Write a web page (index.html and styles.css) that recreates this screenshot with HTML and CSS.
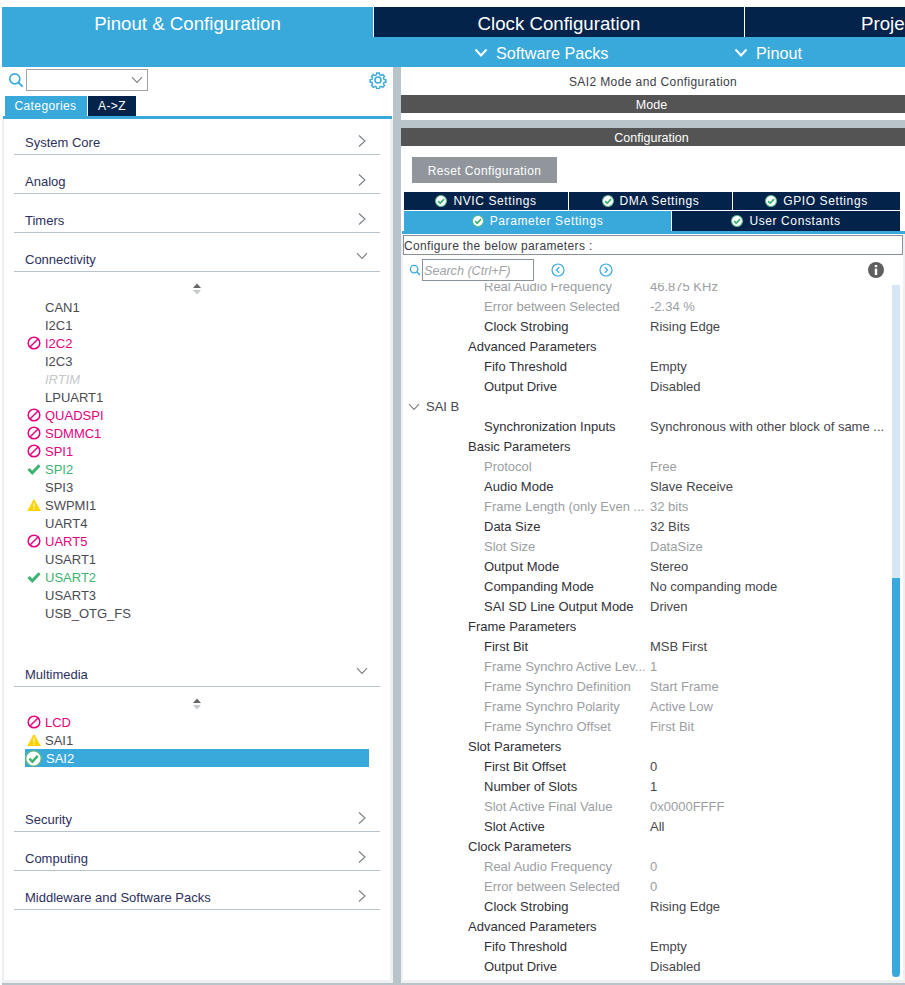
FILE: index.html
```html
<!DOCTYPE html>
<html>
<head>
    <title>SAI2 Mode and Configuration</title>
    <link rel="stylesheet" href="styles.css">
</head>
<body>
    <svg class="defs" width="0" height="0">
        <symbol id="ban" viewBox="0 0 14 14"><circle cx="7" cy="7" r="5.8" fill="none" stroke="#e6007e" stroke-width="1.5"/><path d="M3 11 11 3" stroke="#e6007e" stroke-width="1.5"/></symbol>
        <symbol id="tick" viewBox="0 0 14 14"><path d="M1.5 7 5.3 10.8 12.5 3.2" fill="none" stroke="#3cb371" stroke-width="3"/></symbol>
        <symbol id="warn" viewBox="0 0 14 14"><path d="M7 .8 13.8 13H.2Z" fill="#ffd200"/><path d="M7 5v4.4M7 10.4v1.3" stroke="#fff" stroke-width="1.1"/></symbol>
        <symbol id="okdot" viewBox="0 0 14 14"><circle cx="7" cy="7" r="6.4" fill="#fff" stroke="#5cb88a" stroke-width="1.2"/><path d="M3.6 7.2 6.1 9.6 10.5 4.8" fill="none" stroke="#3cb371" stroke-width="2"/></symbol>
        <symbol id="right" viewBox="0 0 12 14"><path d="M3 1.5 9 7 3 12.5" fill="none" stroke="#7b8086" stroke-width="1.1"/></symbol>
        <symbol id="down" viewBox="0 0 14 12"><path d="M2 3.2 7 8.4 12 3.2" fill="none" stroke="#7b8086" stroke-width="1.1"/></symbol>
        <symbol id="white-down" viewBox="0 0 14 12"><path d="M1.5 2.5 7 8.5 12.5 2.5" fill="none" stroke="#fff" stroke-width="2"/></symbol>
        <symbol id="lens" viewBox="0 0 16 16"><circle cx="6.8" cy="6.8" r="5" fill="none" stroke="#39a9dc" stroke-width="1.7"/><path d="M10.4 10.4 14.6 14.6" stroke="#39a9dc" stroke-width="2"/></symbol>
        <symbol id="sort" viewBox="0 0 10 12"><path d="M5 .5 9 5H1Z" fill="#666"/><path d="M5 11.5 9 7H1Z" fill="#c4c8cc"/></symbol>
    </svg>

    <div class="app">
        <div class="main-tabs">
            <div class="main-tab active">Pinout &amp; Configuration</div>
            <div class="main-tab clock">Clock Configuration</div>
            <div class="main-tab project">Project Manager</div>
        </div>
        <div class="sub-bar">
            <div class="sub-item packs"><svg class="sub-icon"><use href="#white-down"/></svg>Software Packs</div>
            <div class="sub-item pinout"><svg class="sub-icon"><use href="#white-down"/></svg>Pinout</div>
        </div>

        <div class="columns">
            <div class="left">
                <div class="search-row">
                    <svg class="lens"><use href="#lens"/></svg>
                    <div class="select"><svg class="select-arrow"><use href="#down"/></svg></div>
                    <svg class="gear" viewBox="0 0 18 18">
                        <path d="M7.6 1.2h2.8l.4 2.1 1.5.7 1.9-1.1 2 2-1.1 1.8.6 1.6 2.1.4v2.6l-2.1.4-.6 1.6 1.1 1.8-2 2-1.9-1.1-1.5.7-.4 2.1H7.6l-.4-2.1-1.5-.7-1.9 1.1-2-2 1.1-1.8-.6-1.6-2.1-.4V8.7l2.1-.4.6-1.6-1.1-1.8 2-2 1.9 1.1 1.5-.7z" transform="translate(.9 .9) scale(.9)" fill="none" stroke="#39a9dc" stroke-width="1.6"/>
                        <circle cx="9" cy="9" r="3" fill="none" stroke="#39a9dc" stroke-width="1.6"/>
                    </svg>
                </div>
                <div class="cat-tabs">
                    <div class="cat-tab active">Categories</div>
                    <div class="cat-tab az">A-&gt;Z</div>
                </div>
                <div class="cat-line"></div>
                <div class="tree">
                    <div class="cat first">System Core<svg class="cat-right"><use href="#right"/></svg></div>
                    <div class="cat">Analog<svg class="cat-right"><use href="#right"/></svg></div>
                    <div class="cat">Timers<svg class="cat-right"><use href="#right"/></svg></div>
                    <div class="cat">Connectivity<svg class="cat-down"><use href="#down"/></svg></div>
                    <div class="sort"><svg class="sort-icon"><use href="#sort"/></svg></div>
                    <div class="items connectivity">
                        <div class="item"><span class="slot"></span>CAN1</div>
                        <div class="item"><span class="slot"></span>I2C1</div>
                        <div class="item pink"><svg class="slot"><use href="#ban"/></svg>I2C2</div>
                        <div class="item"><span class="slot"></span>I2C3</div>
                        <div class="item off"><span class="slot"></span>IRTIM</div>
                        <div class="item"><span class="slot"></span>LPUART1</div>
                        <div class="item pink"><svg class="slot"><use href="#ban"/></svg>QUADSPI</div>
                        <div class="item pink"><svg class="slot"><use href="#ban"/></svg>SDMMC1</div>
                        <div class="item pink"><svg class="slot"><use href="#ban"/></svg>SPI1</div>
                        <div class="item green"><svg class="slot"><use href="#tick"/></svg>SPI2</div>
                        <div class="item"><span class="slot"></span>SPI3</div>
                        <div class="item"><svg class="slot"><use href="#warn"/></svg>SWPMI1</div>
                        <div class="item"><span class="slot"></span>UART4</div>
                        <div class="item pink"><svg class="slot"><use href="#ban"/></svg>UART5</div>
                        <div class="item"><span class="slot"></span>USART1</div>
                        <div class="item green"><svg class="slot"><use href="#tick"/></svg>USART2</div>
                        <div class="item"><span class="slot"></span>USART3</div>
                        <div class="item"><span class="slot"></span>USB_OTG_FS</div>
                    </div>
                    <div class="cat">Multimedia<svg class="cat-down"><use href="#down"/></svg></div>
                    <div class="sort"><svg class="sort-icon"><use href="#sort"/></svg></div>
                    <div class="items multimedia">
                        <div class="item pink"><svg class="slot"><use href="#ban"/></svg>LCD</div>
                        <div class="item"><svg class="slot"><use href="#warn"/></svg>SAI1</div>
                        <div class="item selected"><svg class="slot big"><use href="#okdot"/></svg>SAI2</div>
                    </div>
                    <div class="cat">Security<svg class="cat-right"><use href="#right"/></svg></div>
                    <div class="cat">Computing<svg class="cat-right"><use href="#right"/></svg></div>
                    <div class="cat">Middleware and Software Packs<svg class="cat-right"><use href="#right"/></svg></div>
                </div>
            </div>

            <div class="divider"></div>

            <div class="right">
                <div class="panel-title">SAI2 Mode and Configuration</div>
                <div class="dark-bar">Mode</div>
                <div class="mode-space"></div>
                <div class="splitter"></div>
                <div class="dark-bar">Configuration</div>
                <button class="reset">Reset Configuration</button>
                <div class="tab-row top">
                    <div class="set-tab nvic"><svg class="ok"><use href="#okdot"/></svg>NVIC Settings</div>
                    <div class="set-tab dma"><svg class="ok"><use href="#okdot"/></svg>DMA Settings</div>
                    <div class="set-tab last"><svg class="ok"><use href="#okdot"/></svg>GPIO Settings</div>
                </div>
                <div class="tab-row bottom">
                    <div class="set-tab active"><svg class="ok"><use href="#okdot"/></svg>Parameter Settings</div>
                    <div class="set-tab last"><svg class="ok"><use href="#okdot"/></svg>User Constants</div>
                </div>
                <div class="tab-line"></div>
                <div class="config-body">
                    <div class="hint">Configure the below parameters :</div>
                    <div class="param-search">
                        <svg class="mini-lens"><use href="#lens"/></svg>
                        <div class="search-box">Search (Ctrl+F)</div>
                        <svg class="nav prev" viewBox="0 0 14 14"><circle cx="7" cy="7" r="6" fill="none" stroke="#39a9dc" stroke-width="1.2"/><path d="M8.2 4.2 5.4 7l2.8 2.8" fill="none" stroke="#39a9dc" stroke-width="1.2"/></svg>
                        <svg class="nav next" viewBox="0 0 14 14"><circle cx="7" cy="7" r="6" fill="none" stroke="#39a9dc" stroke-width="1.2"/><path d="M5.8 4.2 8.6 7l-2.8 2.8" fill="none" stroke="#39a9dc" stroke-width="1.2"/></svg>
                        <svg class="info" viewBox="0 0 16 16"><circle cx="8" cy="8" r="8" fill="#5f5f5f"/><rect x="6.8" y="6.6" width="2.4" height="6.4" fill="#fff"/><rect x="6.8" y="3" width="2.4" height="2.2" fill="#fff"/></svg>
                    </div>
                    <div class="params-wrap">
                        <div class="params">
                            <div class="row off"><span class="name n2">Real Audio Frequency</span><span>46.875 KHz</span></div>
                            <div class="row off"><span class="name n2">Error between Selected</span><span>-2.34 %</span></div>
                            <div class="row"><span class="name n2">Clock Strobing</span><span>Rising Edge</span></div>
                            <div class="row"><span class="name n1">Advanced Parameters</span></div>
                            <div class="row"><span class="name n2">Fifo Threshold</span><span>Empty</span></div>
                            <div class="row"><span class="name n2">Output Drive</span><span>Disabled</span></div>
                            <div class="row group"><svg class="group-arrow"><use href="#down"/></svg>SAI B</div>
                            <div class="row"><span class="name n2">Synchronization Inputs</span><span>Synchronous with other block of same ...</span></div>
                            <div class="row"><span class="name n1">Basic Parameters</span></div>
                            <div class="row off"><span class="name n2">Protocol</span><span>Free</span></div>
                            <div class="row"><span class="name n2">Audio Mode</span><span>Slave Receive</span></div>
                            <div class="row off"><span class="name n2">Frame Length (only Even ...</span><span>32 bits</span></div>
                            <div class="row"><span class="name n2">Data Size</span><span>32 Bits</span></div>
                            <div class="row off"><span class="name n2">Slot Size</span><span>DataSize</span></div>
                            <div class="row"><span class="name n2">Output Mode</span><span>Stereo</span></div>
                            <div class="row"><span class="name n2">Companding Mode</span><span>No companding mode</span></div>
                            <div class="row"><span class="name n2">SAI SD Line Output Mode</span><span>Driven</span></div>
                            <div class="row"><span class="name n1">Frame Parameters</span></div>
                            <div class="row"><span class="name n2">First Bit</span><span>MSB First</span></div>
                            <div class="row off"><span class="name n2">Frame Synchro Active Lev...</span><span>1</span></div>
                            <div class="row off"><span class="name n2">Frame Synchro Definition</span><span>Start Frame</span></div>
                            <div class="row off"><span class="name n2">Frame Synchro Polarity</span><span>Active Low</span></div>
                            <div class="row off"><span class="name n2">Frame Synchro Offset</span><span>First Bit</span></div>
                            <div class="row"><span class="name n1">Slot Parameters</span></div>
                            <div class="row"><span class="name n2">First Bit Offset</span><span>0</span></div>
                            <div class="row"><span class="name n2">Number of Slots</span><span>1</span></div>
                            <div class="row off"><span class="name n2">Slot Active Final Value</span><span>0x0000FFFF</span></div>
                            <div class="row"><span class="name n2">Slot Active</span><span>All</span></div>
                            <div class="row"><span class="name n1">Clock Parameters</span></div>
                            <div class="row off"><span class="name n2">Real Audio Frequency</span><span>0</span></div>
                            <div class="row off"><span class="name n2">Error between Selected</span><span>0</span></div>
                            <div class="row"><span class="name n2">Clock Strobing</span><span>Rising Edge</span></div>
                            <div class="row"><span class="name n1">Advanced Parameters</span></div>
                            <div class="row"><span class="name n2">Fifo Threshold</span><span>Empty</span></div>
                            <div class="row"><span class="name n2">Output Drive</span><span>Disabled</span></div>
                        </div>
                        <div class="scrollbar"><div class="thumb"></div></div>
                    </div>
                </div>
            </div>
        </div>
        <div class="bottom-edge"></div>
    </div>
</body>
</html>
```

FILE: styles.css
```css
body {
    margin: 0;
    background-color: white;
    font-family: "Liberation Sans", Arial, sans-serif;
    font-size: 13px;
    color: #3c3c44;
}
.defs {
    position: absolute;
}
.app {
    height: 985px;
    width: 905px;
    padding: 7px 0 0 2px;
    box-sizing: border-box;
    overflow: hidden;
    display: flex;
    flex-direction: column;
}
.main-tabs {
    display: flex;
    height: 30px;
    flex-shrink: 0;
    font-size: 18.67px;
    color: white;
    background-color: #03234b;
    overflow: hidden;
}
.main-tab {
    line-height: 34px;
    height: 30px;
    text-align: center;
    white-space: nowrap;
    flex-shrink: 0;
}
.main-tab.active {
    width: 371px;
    background-color: #39a9dc;
    border-right: 1px solid white;
}
.main-tab.clock {
    width: 370px;
    border-right: 1px solid white;
}
.main-tab.project {
    padding-left: 116px;
}
.sub-bar {
    display: flex;
    height: 30px;
    box-sizing: border-box;
    padding-top: 2px;
    flex-shrink: 0;
    background-color: #39a9dc;
    color: white;
    font-size: 16.2px;
}
.sub-item {
    display: flex;
    align-items: center;
    white-space: nowrap;
}
.sub-item.packs {
    margin-left: 472px;
    width: 260px;
}
.sub-icon {
    width: 14px;
    height: 12px;
    margin-right: 8px;
}
.columns {
    display: flex;
    flex: 1;
    min-height: 0;
}
.left {
    width: 391px;
    flex-shrink: 0;
    display: flex;
    flex-direction: column;
}
.divider {
    width: 8px;
    flex-shrink: 0;
    background-color: #b8c4ca;
}
.search-row {
    display: flex;
    align-items: center;
    height: 29px;
    box-sizing: border-box;
    padding: 0 6px 3px 6px;
    flex-shrink: 0;
}
.lens {
    width: 16px;
    height: 16px;
    margin-right: 2px;
}
.select {
    width: 117px;
    height: 20px;
    border: 1px solid #9ea3a8;
    display: flex;
    align-items: center;
    justify-content: flex-end;
    padding-right: 3px;
}
.select-arrow {
    width: 14px;
    height: 12px;
}
.gear {
    width: 18px;
    height: 18px;
    margin-left: auto;
}
.cat-tabs {
    display: flex;
    height: 20px;
    padding-left: 3px;
    flex-shrink: 0;
    font-size: 12px;
    letter-spacing: 0.4px;
    line-height: 20px;
    color: white;
}
.cat-tab {
    text-align: center;
    background-color: #03234b;
}
.cat-tab.active {
    width: 81px;
    padding-right: 1px;
    background-color: #39a9dc;
    margin-right: 1px;
}
.cat-tab.az {
    width: 48px;
}
.cat-line {
    height: 3px;
    flex-shrink: 0;
    margin: 0 1px;
    background-color: #39a9dc;
}
.tree {
    flex: 1;
    border-left: 2px solid #eef0f1;
    border-right: 3px solid #eef0f1;
    border-bottom: 3px solid #eef0f1;
    padding: 0 10px;
}
.cat {
    position: relative;
    height: 27px;
    margin-top: 11px;
    padding-left: 11px;
    line-height: 31px;
    border-bottom: 1px solid #b8c4ca;
    color: #2c2f5c;
}
.cat.first {
    margin-top: 8px;
}
.cat-right {
    position: absolute;
    right: 12px;
    top: 7px;
    width: 12px;
    height: 14px;
}
.cat-down {
    position: absolute;
    right: 11px;
    top: 6px;
    width: 14px;
    height: 12px;
}
.sort {
    height: 12px;
    margin-top: 11px;
    text-align: center;
    line-height: 0;
}
.sort-icon {
    width: 10px;
    height: 12px;
}
.items {
    margin-top: 3px;
}
.items.connectivity {
    margin-bottom: 37px;
}
.items.multimedia {
    margin-bottom: 37px;
}
.item {
    display: flex;
    align-items: center;
    height: 18px;
    margin: 0 11px;
    color: #4a4a52;
    white-space: nowrap;
}
.slot {
    width: 14px;
    height: 14px;
    margin-left: 2px;
    margin-right: 4px;
    flex-shrink: 0;
    display: inline-block;
}
.item.pink {
    color: #e6007e;
}
.item.green {
    color: #3cb371;
}
.item.off {
    color: #c4c8cc;
    font-style: italic;
}
.item.selected {
    background-color: #39a9dc;
    color: white;
}
.slot.big {
    width: 17px;
    height: 17px;
    margin-left: 0;
    margin-right: 4px;
}
.right {
    flex: 1;
    min-width: 0;
    display: flex;
    flex-direction: column;
}
.panel-title {
    height: 28px;
    line-height: 30px;
    text-align: center;
    font-size: 12px;
    letter-spacing: 0.4px;
    flex-shrink: 0;
}
.dark-bar {
    height: 18px;
    line-height: 20px;
    padding-right: 3px;
    flex-shrink: 0;
    background-color: #545454;
    color: white;
    text-align: center;
    font-size: 12.5px;
}
.mode-space {
    height: 7px;
    flex-shrink: 0;
}
.splitter {
    height: 8px;
    flex-shrink: 0;
    background-color: #b8c4ca;
}
.reset {
    align-self: flex-start;
    width: 145px;
    height: 26px;
    margin: 11px 0 9px 11px;
    padding: 1px 0 0;
    flex-shrink: 0;
    border: none;
    background-color: #90969c;
    color: white;
    font-family: inherit;
    font-size: 12px;
    letter-spacing: 0.4px;
}
.tab-row {
    display: flex;
    flex-shrink: 0;
    margin-left: 3px;
    margin-right: 5px;
    font-size: 12px;
    letter-spacing: 0.6px;
    color: white;
}
.tab-row.top {
    height: 18px;
    margin-bottom: 1px;
    line-height: 19px;
}
.tab-row.bottom {
    height: 20px;
}
.set-tab {
    flex: none;
    display: flex;
    align-items: center;
    justify-content: center;
    background-color: #03234b;
    margin-right: 1px;
    white-space: nowrap;
}
.set-tab.nvic {
    width: 164px;
}
.set-tab.dma {
    width: 163px;
}
.set-tab.last {
    flex: 1;
    margin-right: 0;
}
.set-tab.active {
    width: 267px;
    background-color: #39a9dc;
}
.ok {
    width: 12px;
    height: 12px;
    margin-right: 6px;
}
.tab-line {
    height: 3px;
    flex-shrink: 0;
    margin-left: 1px;
    background-color: #39a9dc;
}
.config-body {
    flex: 1;
    min-height: 0;
    display: flex;
    flex-direction: column;
    border-left: 2px solid #eef0f1;
    border-right: 2px solid #eef0f1;
    border-bottom: 3px solid #eef0f1;
    padding-top: 1px;
}
.hint {
    height: 18px;
    line-height: 20px;
    padding-left: 0;
    border: 1px solid #8a9299;
    flex-shrink: 0;
    font-size: 12px;
    letter-spacing: 0.35px;
}
.param-search {
    display: flex;
    align-items: center;
    height: 24px;
    box-sizing: border-box;
    padding: 0 0 2px 6px;
    margin-top: 4px;
    flex-shrink: 0;
}
.mini-lens {
    width: 12px;
    height: 12px;
    margin-right: 1px;
}
.search-box {
    width: 109px;
    height: 20px;
    line-height: 22px;
    padding-left: 1px;
    border: 1px solid #8a9299;
    color: #a0a4a8;
    font-style: italic;
    font-size: 12.6px;
}
.nav {
    width: 14px;
    height: 14px;
}
.prev {
    margin-left: 17px;
}
.next {
    margin-left: 34px;
}
.info {
    width: 16px;
    height: 16px;
    margin-left: 255px;
}
.params-wrap {
    flex: 1;
    min-height: 0;
    display: flex;
    overflow: hidden;
}
.params {
    flex: 1;
    min-width: 0;
    margin-top: -6px;
}
.row {
    display: flex;
    height: 20px;
    line-height: 20px;
    white-space: nowrap;
    font-size: 13px;
    color: #46464c;
}
.row.off {
    color: #9b9ea2;
}
.name {
    width: 247px;
    box-sizing: border-box;
    flex-shrink: 0;
    color: #303036;
}
.row.off .name {
    color: #9b9ea2;
}
.n1 {
    padding-left: 65px;
}
.n2 {
    padding-left: 81px;
}
.row.group {
    align-items: center;
    padding-left: 4px;
}
.group-arrow {
    width: 14px;
    height: 12px;
    margin-right: 5px;
}
.scrollbar {
    width: 8px;
    margin: 2px 3px 3px 0;
    flex-shrink: 0;
    background-color: #d6e6f4;
    display: flex;
    flex-direction: column;
    justify-content: flex-end;
}
.thumb {
    height: 399px;
    background-color: #39a9dc;
    border-radius: 0 0 4px 4px;
}
.bottom-edge {
    height: 2px;
    flex-shrink: 0;
    background-color: #b8c4ca;
}
```
